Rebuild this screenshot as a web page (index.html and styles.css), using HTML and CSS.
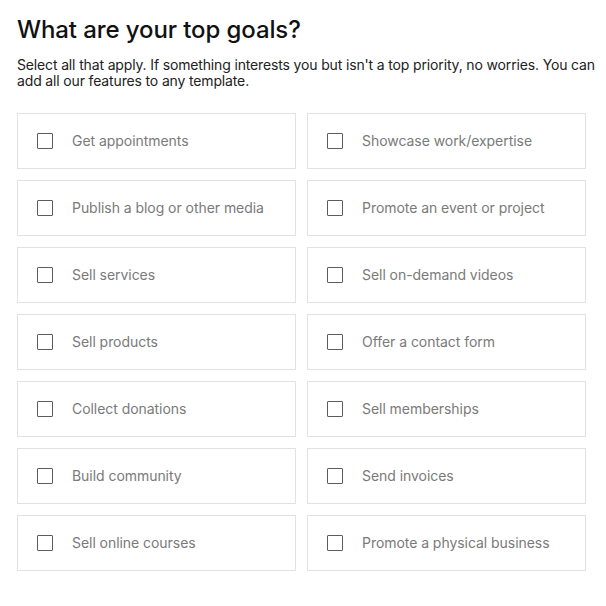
FILE: index.html
```html
<!DOCTYPE html>
<html lang="en">
<head>
    <meta charset="UTF-8">
    <meta name="viewport" content="width=device-width, initial-scale=1.0">
    <title>Top goals</title>
    <link rel="stylesheet" href="styles.css">
</head>
<body>

    <div class="goals">
        <h1>What are your top goals?</h1>
        <p class="intro">Select all that apply. If something interests you but isn't a top priority, no worries. You can add all our features to any template.</p>

        <!-- Lista de objetivos -->
        <div class="goal-grid">
            <label class="goal"><input type="checkbox"><span>Get appointments</span></label>
            <label class="goal"><input type="checkbox"><span>Showcase work/expertise</span></label>
            <label class="goal"><input type="checkbox"><span>Publish a blog or other media</span></label>
            <label class="goal"><input type="checkbox"><span>Promote an event or project</span></label>
            <label class="goal"><input type="checkbox"><span>Sell services</span></label>
            <label class="goal"><input type="checkbox"><span>Sell on-demand videos</span></label>
            <label class="goal"><input type="checkbox"><span>Sell products</span></label>
            <label class="goal"><input type="checkbox"><span>Offer a contact form</span></label>
            <label class="goal"><input type="checkbox"><span>Collect donations</span></label>
            <label class="goal"><input type="checkbox"><span>Sell memberships</span></label>
            <label class="goal"><input type="checkbox"><span>Build community</span></label>
            <label class="goal"><input type="checkbox"><span>Send invoices</span></label>
            <label class="goal"><input type="checkbox"><span>Sell online courses</span></label>
            <label class="goal"><input type="checkbox"><span>Promote a physical business</span></label>
        </div>
    </div>

</body>
</html>
```

FILE: styles.css
```css
/* Reset básico */
* {
    margin: 0;
    padding: 0;
    box-sizing: border-box;
}

body {
    font-family: 'Inter', 'Liberation Sans', sans-serif;
    background-color: #fff;
    color: #1a1a1a;
}

.goals {
    padding: 14px 0 0 17px;
}

h1 {
    font-size: 24px;
    font-weight: 500;
    line-height: 32px;
    letter-spacing: -0.1px;
    color: #111;
}

.intro {
    margin-top: 11px;
    font-size: 14px;
    line-height: 16px;
    letter-spacing: -0.15px;
    color: #222;
}

/* Grade de cards */
.goal-grid {
    margin-top: 24px;
    width: 569px;
    display: grid;
    grid-template-columns: 1fr 1fr;
    gap: 11px;
}

.goal {
    height: 56px;
    display: flex;
    align-items: center;
    padding: 0 0 2px 19px;
    border: 1px solid #e2e2e2;
    cursor: pointer;
}

.goal input {
    appearance: none;
    width: 16px;
    height: 16px;
    border: 1.5px solid #5c5c5c;
    border-radius: 1px;
    margin: 2px 19px 0 0;
    flex-shrink: 0;
}

.goal span {
    font-size: 14px;
    letter-spacing: -0.05px;
    color: #7a7a7a;
}
```
